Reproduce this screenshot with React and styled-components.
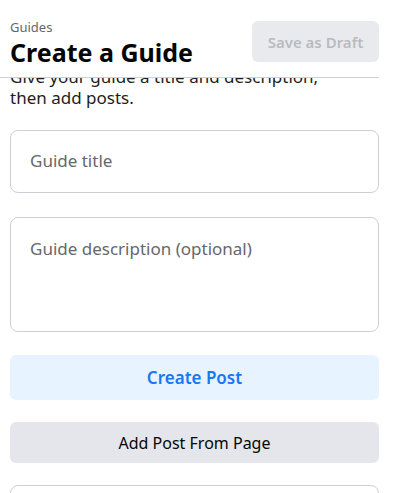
import React, { useLayoutEffect, useRef } from 'react'
import styled, { createGlobalStyle } from 'styled-components'

const GlobalStyle = createGlobalStyle`
	html, body {
		margin: 0;
		padding: 0;
		background: #fff;
	}
	body {
		font-family: "Noto Sans", "Open Sans", Arial, sans-serif;
		color: #050505;
	}
	* {
		box-sizing: border-box;
	}
`

const Scroller = styled.div`
	width: 379px;
	height: 100vh;
	overflow-y: auto;
	scrollbar-width: none;
	&::-webkit-scrollbar {
		display: none;
	}
`

const Header = styled.header`
	position: sticky;
	top: 0;
	z-index: 2;
	background: #fff;
	height: 78px;
	padding: 19px 0 0 10px;
	border-bottom: 1px solid #ced0d4;
	display: flex;
	justify-content: space-between;
	align-items: flex-start;
`

const Titles = styled.div`
	display: flex;
	flex-direction: column;
	gap: 2px;
`

const Crumb = styled.span`
	font-size: 13px;
	line-height: 16px;
	color: #65676b;
`

const Heading = styled.h1`
	margin: 0;
	font-size: 25px;
	line-height: 30px;
	font-weight: 700;
	color: #050505;
`

const DraftButton = styled.button`
	margin-top: 2px;
	width: 127px;
	height: 41px;
	border: none;
	border-radius: 6px;
	background: #e4e6eb;
	opacity: 0.8;
	color: #a8abaf;
	font-family: inherit;
	font-size: 15px;
	font-weight: 600;
`

const Body = styled.div`
	padding: 10px 0 40px 10px;
	display: flex;
	flex-direction: column;
`

const Intro = styled.p`
	margin: 0 0 22px;
	padding-right: 30px;
	font-size: 17px;
	line-height: 21px;
	color: #1c1e21;
`

const Field = styled.div`
	height: ${props => props.tall ? '115px' : '63px'};
	margin-bottom: ${props => props.gap || '24px'};
	border: 1px solid #ccd0d5;
	border-radius: 8px;
	padding: ${props => props.tall ? '20px 19px' : '19px 19px'};
	font-size: 17px;
	line-height: 22px;
	color: #65676b;
`

const Action = styled.button`
	height: ${props => props.primary ? '45px' : '41px'};
	margin-bottom: 22px;
	border: none;
	border-radius: 6px;
	background: ${props => props.primary ? '#e7f3ff' : '#e4e6eb'};
	color: ${props => props.primary ? '#1877f2' : '#050505'};
	font-family: inherit;
	font-size: ${props => props.primary ? '17px' : '16px'};
	font-weight: ${props => props.primary ? 600 : 400};
`

const PostBox = styled.div`
	height: 80px;
	border: 1px solid #ccd0d5;
	border-radius: 8px;
`

export default function App() {
	const ref = useRef(null)

	useLayoutEffect(() => {
		if (ref.current) ref.current.scrollTop = 22
	}, [])

	return (
		<>
			<GlobalStyle />
			<Scroller ref={ref}>
				<Header>
					<Titles>
						<Crumb>Guides</Crumb>
						<Heading>Create a Guide</Heading>
					</Titles>
					<DraftButton disabled>Save as Draft</DraftButton>
				</Header>
				<Body>
					<Intro>Give your guide a title and description, then add posts.</Intro>
					<Field>Guide title</Field>
					<Field tall gap="23px">Guide description (optional)</Field>
					<Action primary>Create Post</Action>
					<Action>Add Post From Page</Action>
					<PostBox />
				</Body>
			</Scroller>
		</>
	)
}
